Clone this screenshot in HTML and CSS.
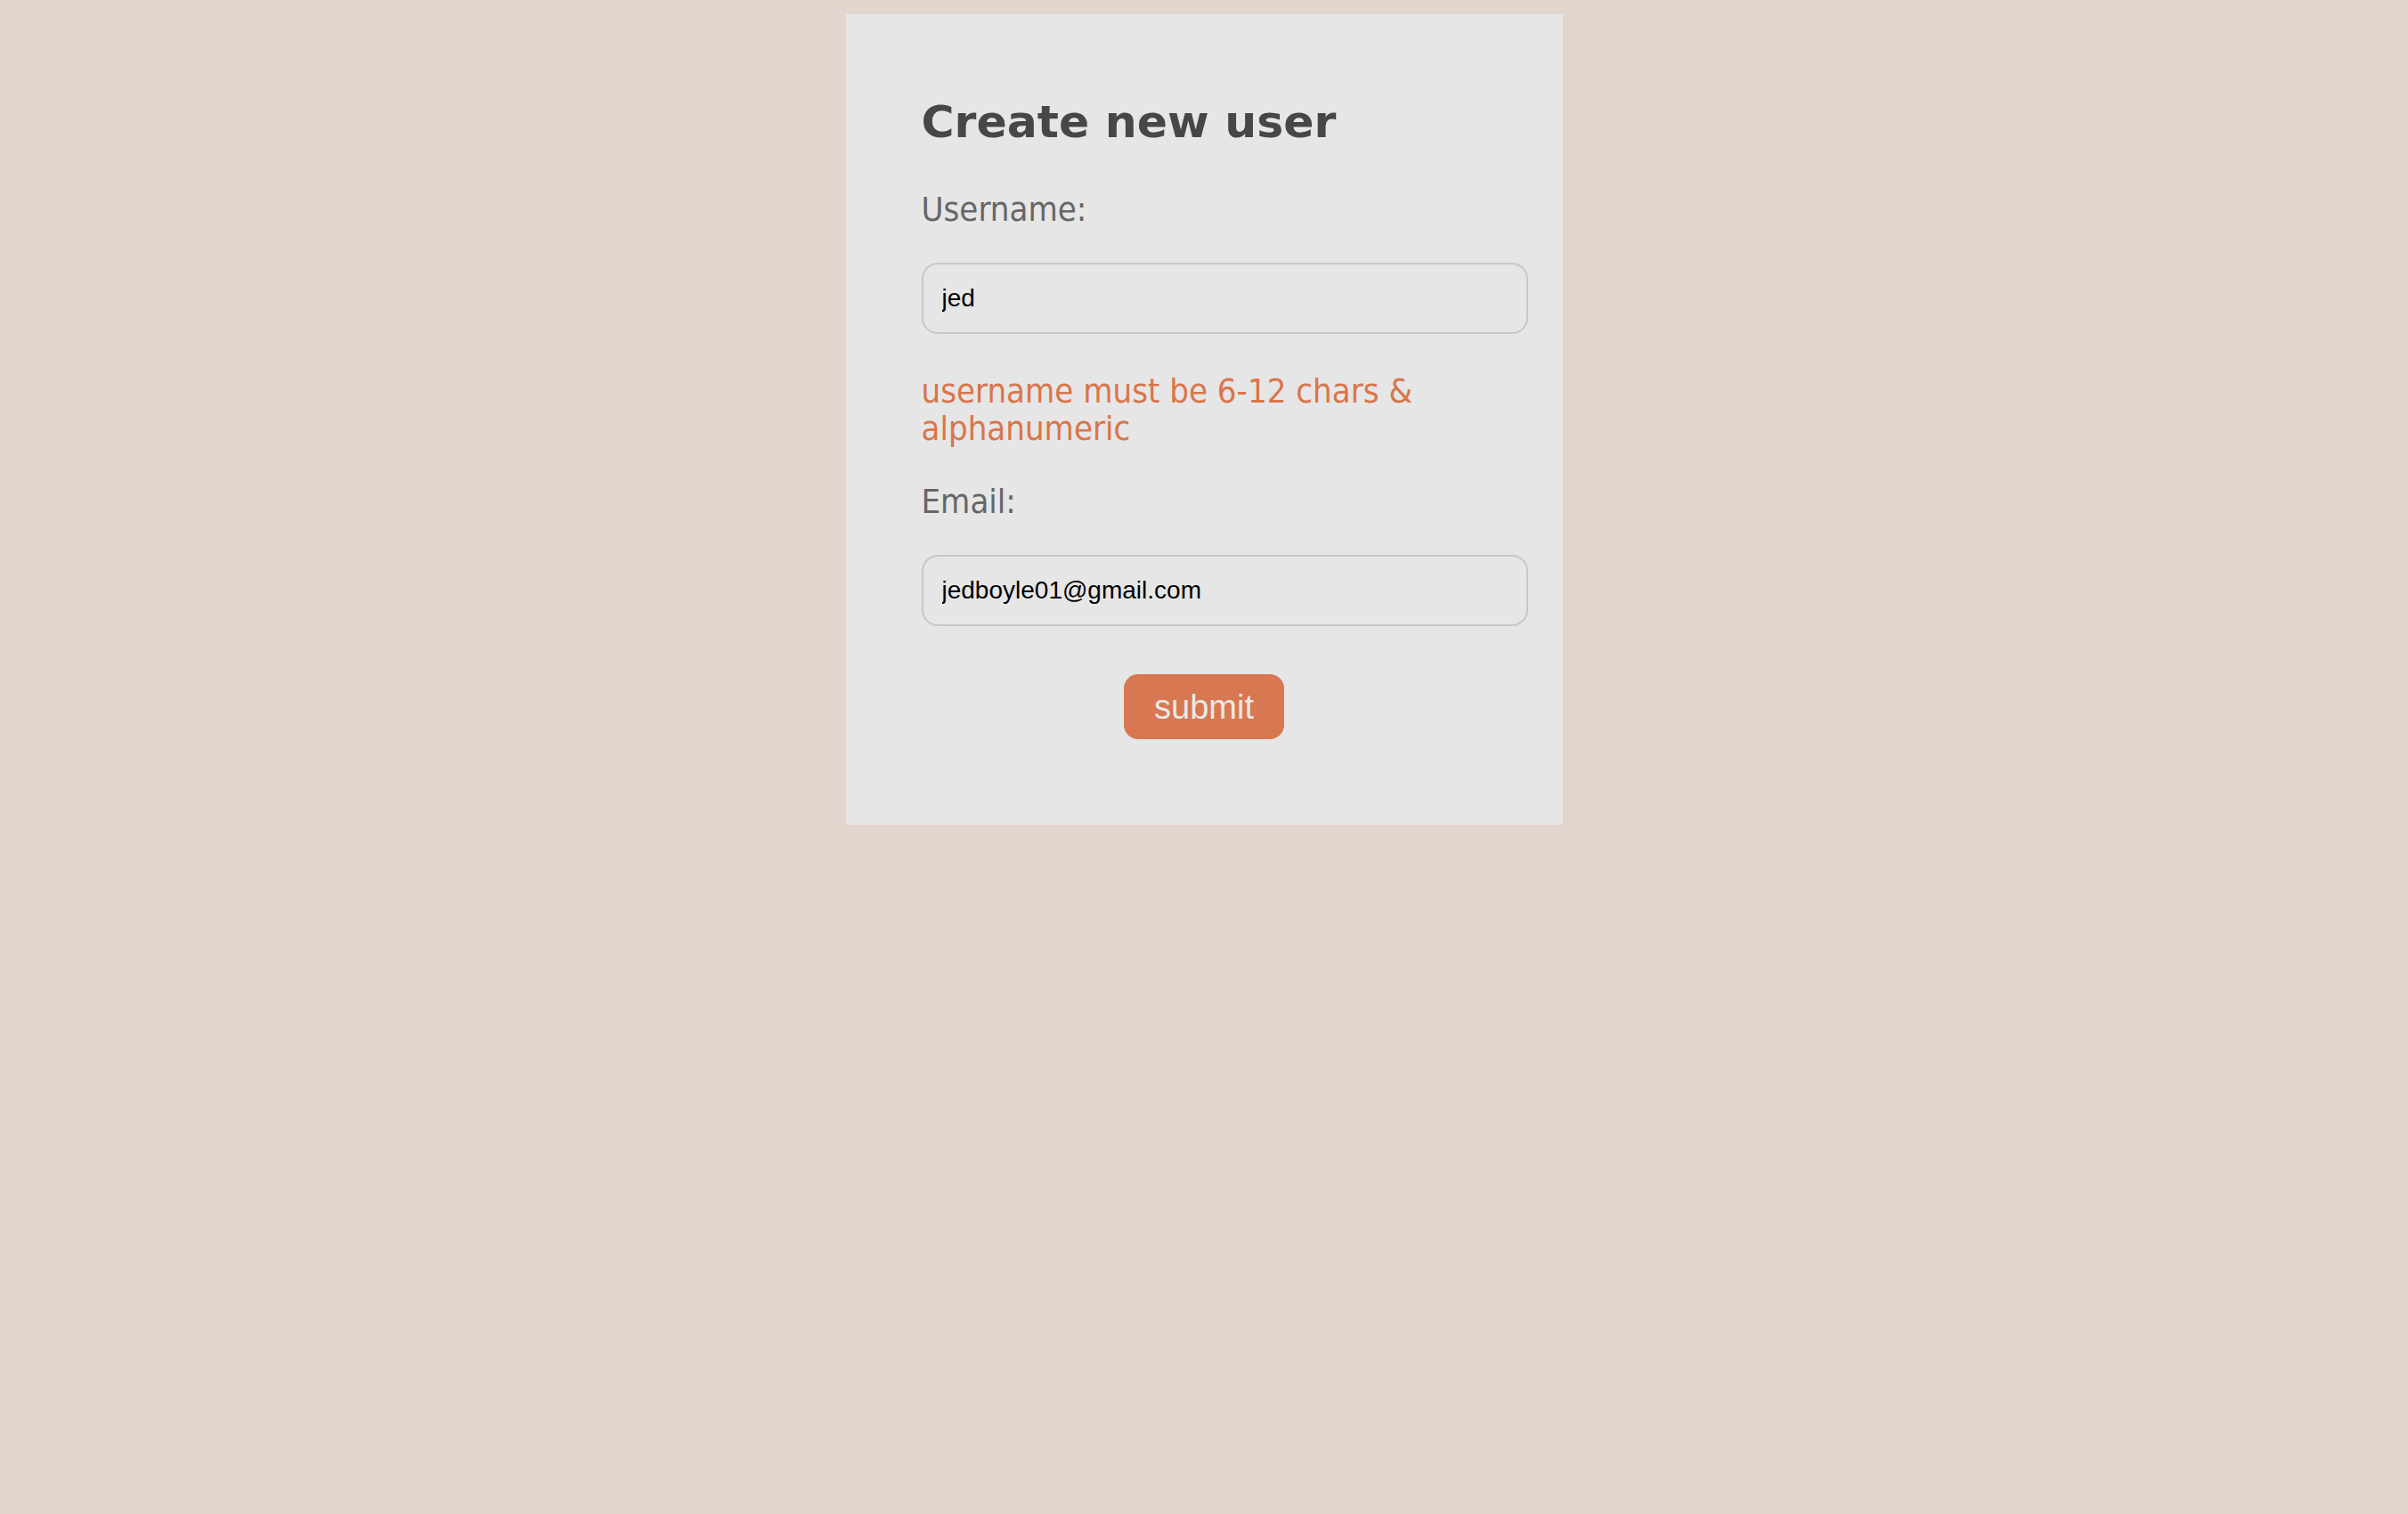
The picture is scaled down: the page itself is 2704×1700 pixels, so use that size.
FILE: index.html
```html
<!DOCTYPE html>
<html lang="en">
<head>
<meta charset="utf-8">
<title>Create new user</title>
<link rel="stylesheet" href="styles.css">
</head>
<body>
<form class="card">
  <h2 class="title">Create new user</h2>
  <label class="label" for="username">Username:</label>
  <input class="field" id="username" type="text" value="jed">
  <p class="error">username must be 6-12 chars &amp; alphanumeric</p>
  <label class="label" for="email">Email:</label>
  <input class="field" id="email" type="text" value="jedboyle01@gmail.com">
  <div class="actions">
    <button class="submit" type="button">submit</button>
  </div>
</form>
</body>
</html>
```
FILE: styles.css
```css
html, body {
  margin: 0;
  padding: 0;
  background: #e2d5cd;
  min-height: 100%;
}
body {
  padding-top: 16px;
}
.card {
  display: flex;
  flex-direction: column;
  box-sizing: border-box;
  width: 805px;
  margin: 0 auto;
  background: #e6e6e6;
  padding: 91px 85px 96px 85px;
  font-family: "DejaVu Sans Condensed", "DejaVu Sans", sans-serif;
}
.title {
  margin: 0;
  font-family: "DejaVu Sans", sans-serif;
  font-weight: bold;
  font-size: 50.5px;
  line-height: 60px;
  color: #474747;
}
.label {
  margin-top: 46px;
  font-size: 38px;
  line-height: 44px;
  color: #666666;
  font-stretch: condensed;
}
.field {
  box-sizing: content-box;
  width: 100%;
  height: 76px;
  margin: 38px 0 0 0;
  padding: 0 21px;
  border: 2px solid #c8c8c8;
  border-radius: 18px;
  background: #e6e6e6;
  font-family: "Liberation Sans", Arial, sans-serif;
  font-size: 28px;
  color: #000000;
  outline: none;
}
.error {
  margin: 43px 0 0 0;
  font-size: 38px;
  line-height: 42px;
  color: #d9754a;
  font-stretch: condensed;
}
.error + .label {
  margin-top: 39px;
}
.actions {
  display: flex;
  justify-content: center;
  margin-top: 54px;
}
.submit {
  box-sizing: border-box;
  width: 180px;
  height: 73px;
  padding: 0;
  border: none;
  border-radius: 16px;
  background: #d77852;
  color: #ece7e4;
  font-family: "Liberation Sans", Arial, sans-serif;
  font-size: 38px;
  line-height: 1;
}
```
